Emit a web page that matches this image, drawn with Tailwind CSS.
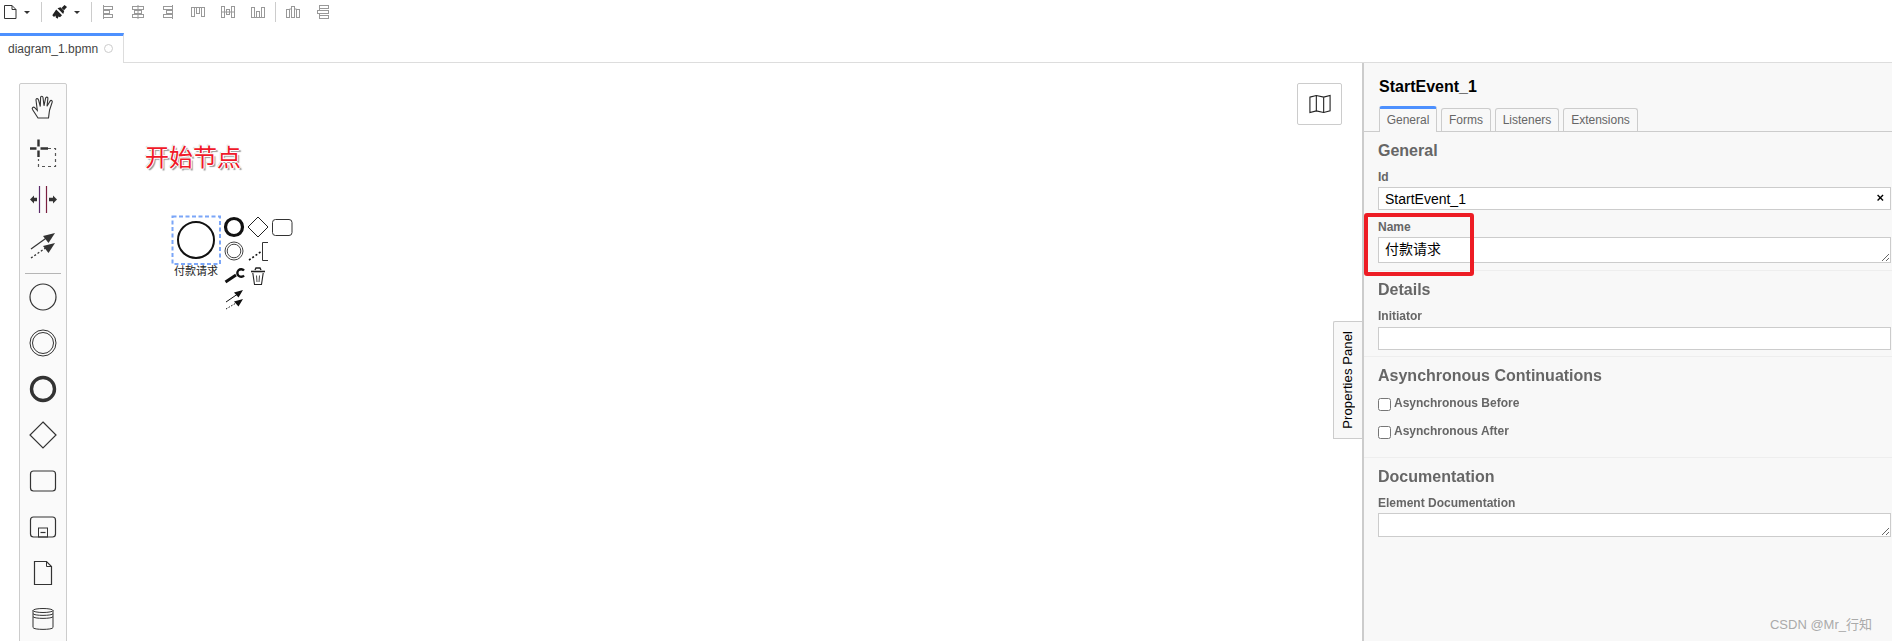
<!DOCTYPE html>
<html lang="zh">
<head>
<meta charset="utf-8">
<title>BPMN editor</title>
<script src="https://cdn.jsdelivr.net/npm/@tailwindcss/browser@4"></script>
</head>
<body class="w-[1892px] h-[641px] overflow-hidden bg-white [font-family:'Liberation_Sans','Noto_Sans_CJK_SC',sans-serif]">
<div class="flex flex-col w-full h-full relative">

  <!-- toolbar -->
  <div class="flex h-[33px] shrink-0 pt-[5px] items-start">
    <div class="w-[24px] h-[14px] pl-[4px]">
      <svg width="14" height="14" viewBox="0 0 14 14" fill="none" stroke="#333" stroke-width="1"><path d="M.5.5H8L12 4.5V13.5H.5Z"/><path d="M8 .5V4.5H12"/></svg>
    </div>
    <div class="w-[10px] h-[14px] flex items-center"><div class="w-0 h-0 border-x-[3.5px] border-x-transparent border-t-[3.5px] border-t-[#333]"></div></div>
    <div class="w-px h-[20px] bg-[#ccc] ml-[7px] -mt-[3px]"></div>
    <div class="w-[31px] h-[14px] pl-[10px]">
      <svg width="15" height="14" viewBox="0 0 15 14" fill="#222"><path d="M9.5 3 12.5 0 15 2 12 5.2Z"/><path d="M5.5 3.2 8.5 2.3 12.2 6 11.2 9Z"/><path d="M4.2 4.5 10 10.3 8 12.3 6.5 11.5 5.7 13.8 3.8 12.5 3.5 10.5 2 12 .3 10.3Z"/></svg>
    </div>
    <div class="w-[11px] ml-px h-[14px] flex items-center"><div class="w-0 h-0 border-x-[3.5px] border-x-transparent border-t-[3.5px] border-t-[#333]"></div></div>
    <div class="w-px h-[20px] bg-[#ccc] ml-[6px] -mt-[3px]"></div>
    <div class="flex">
      <div class="w-[30px] flex justify-center ml-px"><svg width="14" height="14" viewBox="0 0 14 14" fill="none" stroke="#999"><path d="M2.5 0V14"/><rect x="2.5" y="1.5" width="9" height="3"/><rect x="2.5" y="5.5" width="6" height="3"/><rect x="2.5" y="9.5" width="9" height="3"/></svg></div>
      <div class="w-[30px] flex justify-center"><svg width="14" height="14" viewBox="0 0 14 14" fill="none" stroke="#999"><path d="M7 0V14"/><rect x="1.5" y="1.5" width="11" height="3"/><rect x="3.5" y="5.5" width="7" height="3"/><rect x="1.5" y="9.5" width="11" height="3"/></svg></div>
      <div class="w-[30px] flex justify-center"><svg width="14" height="14" viewBox="0 0 14 14" fill="none" stroke="#999"><path d="M11.5 0V14"/><rect x="2.5" y="1.5" width="9" height="3"/><rect x="5.5" y="5.5" width="6" height="3"/><rect x="2.5" y="9.5" width="9" height="3"/></svg></div>
      <div class="w-[30px] flex justify-center"><svg width="14" height="14" viewBox="0 0 14 14" fill="none" stroke="#999"><path d="M0 2.5H14"/><rect x=".5" y="2.5" width="3" height="9"/><rect x="5.5" y="2.5" width="3" height="6"/><rect x="10.5" y="2.5" width="3" height="9"/></svg></div>
      <div class="w-[30px] flex justify-center"><svg width="14" height="14" viewBox="0 0 14 14" fill="none" stroke="#999"><path d="M0 7H14"/><rect x=".5" y="1.5" width="3" height="11"/><rect x="5.5" y="4.5" width="3" height="5"/><rect x="10.5" y="1.5" width="3" height="11"/></svg></div>
      <div class="w-[30px] flex justify-center"><svg width="14" height="14" viewBox="0 0 14 14" fill="none" stroke="#999"><path d="M0 12.5H14"/><rect x=".5" y="2.5" width="3" height="10"/><rect x="5.5" y="6.5" width="3" height="6"/><rect x="10.5" y="2.5" width="3" height="10"/></svg></div>
    </div>
    <div class="w-px h-[20px] bg-[#ccc] ml-[2px] -mt-[3px]"></div>
    <div class="flex ml-[2px]">
      <div class="w-[30px] flex justify-center"><svg width="14" height="14" viewBox="0 0 14 14" fill="none" stroke="#999"><rect x=".5" y="4.5" width="3" height="8"/><rect x="5.5" y="1.5" width="3" height="11"/><rect x="10.5" y="4.5" width="3" height="8"/><path d="M3.5 4H5.5M8.5 4H10.5"/></svg></div>
      <div class="w-[30px] flex justify-center"><svg width="14" height="14" viewBox="0 0 14 14" fill="none" stroke="#999"><rect x="3.5" y=".5" width="9" height="3"/><rect x="1.5" y="5.5" width="11" height="3"/><rect x="3.5" y="10.5" width="9" height="3"/><path d="M3.5 3.5V5.5M3.5 8.5V10.5"/></svg></div>
    </div>
  </div>

  <!-- tab row -->
  <div class="flex h-[30px] shrink-0">
    <div class="w-[124px] border-t-[3px] border-t-[#4d90fe] border-r border-r-[#ddd] flex items-center pl-[8px] gap-[6px] pb-[2px]">
      <span class="text-[12px] leading-[16px] text-[#444]">diagram_1.bpmn</span>
      <span class="w-[9px] h-[9px] rounded-full border border-[#ccc] bg-white"></span>
    </div>
    <div class="flex-1 border-b border-[#ddd]"></div>
  </div>

  <!-- main -->
  <div class="flex flex-1 min-h-0">
    <!-- canvas -->
    <div class="relative flex-1 overflow-hidden">
      <!-- palette -->
      <div class="absolute left-[19px] top-[20px] w-[48px] bottom-[-10px] bg-[#fafafa] border border-[#ccc] rounded-t-[2px] pt-[1px]">
        <svg class="block" width="46" height="46" viewBox="0 0 46 46" fill="none" stroke="#333"><g transform="translate(11 10)" stroke-width="1.1"><path d="M7 23 1.5 14.5C.5 12.8 2.5 11.5 3.7 12.7L6.3 15.5 5 5C4.8 3.3 7 3 7.5 4.8L9.3 11.5 9.6 2.5C9.6.8 11.8.8 12 2.5L13 10.8 14.6 3.2C15 1.5 17.2 1.9 16.9 3.6L16 11.2 19 6.2C19.9 4.7 21.7 5.6 21.2 7.2L18.6 15C18 18 18 20 17.5 23Z"/></g></svg>
        <svg class="block" width="46" height="46" viewBox="0 0 46 46" fill="none" stroke="#333"><path d="M10 17.5H16.5M20.5 17.5H28M18.5 8.5V15.5M18.5 19.5V26" stroke-width="2.4"/><path d="M28 17.5H35.5V35.5H18.5V28" stroke="#555" stroke-width="1.2" stroke-dasharray="3 3"/></svg>
        <svg class="block" width="46" height="46" viewBox="0 0 46 46" fill="none" stroke="#333"><path d="M19.5 9V36" stroke="#5a2a6a" stroke-width="1.2"/><path d="M26.5 9V36" stroke="#7a2040" stroke-width="1.2"/><path d="M10 22.5 14 18.5V20.8H17V24.2H14V26.5Z" fill="#333" stroke="none"/><path d="M37 22.5 33 18.5V20.8H29V24.2H33V26.5Z" fill="#333" stroke="none"/></svg>
        <svg class="block" width="46" height="46" viewBox="0 0 46 46" fill="none" stroke="#333"><path d="M11 26 27 14.5" stroke-width="1.2"/><path d="M35 10 23 13 28.5 20Z" fill="#333" stroke="none"/><path d="M11 35 27 24" stroke-width="1.3" stroke-dasharray="2 2"/><path d="M35 20 23 23 28.5 30Z" fill="#333" stroke="none"/></svg>
        <div class="h-px bg-[#b5b5b5] mx-[5px] mt-[4px]"></div>
        <svg class="block" width="46" height="46" viewBox="0 0 46 46" fill="none" stroke="#333"><circle cx="23" cy="23" r="13" stroke-width="1.2"/></svg>
        <svg class="block" width="46" height="46" viewBox="0 0 46 46" fill="none" stroke="#333"><circle cx="23" cy="23" r="13" stroke-width="1"/><circle cx="23" cy="23" r="10.5" stroke-width="1"/></svg>
        <svg class="block" width="46" height="46" viewBox="0 0 46 46" fill="none" stroke="#333"><circle cx="23" cy="23" r="11.5" stroke-width="3.4"/></svg>
        <svg class="block" width="46" height="46" viewBox="0 0 46 46" fill="none" stroke="#333"><path d="M23 10 36 23 23 36 10 23Z" stroke-width="1.2"/></svg>
        <svg class="block" width="46" height="46" viewBox="0 0 46 46" fill="none" stroke="#333"><rect x="10.5" y="13" width="25" height="20" rx="3" stroke-width="1.2"/></svg>
        <svg class="block" width="46" height="46" viewBox="0 0 46 46" fill="none" stroke="#333"><rect x="10.5" y="13" width="25" height="20" rx="3" stroke-width="1.2"/><rect x="18.5" y="24" width="9" height="9" stroke-width="1"/><path d="M20.5 28.5H25.5" stroke-width="1.2"/></svg>
        <svg class="block" width="46" height="46" viewBox="0 0 46 46" fill="none" stroke="#333"><path d="M14.5 11.5H26.5L31.5 16.5V34.5H14.5Z" stroke-width="1.2"/><path d="M26.5 11.5V16.5H31.5" stroke-width="1"/></svg>
        <svg class="block" width="46" height="46" viewBox="0 0 46 46" fill="none" stroke="#333" stroke-width="1"><ellipse cx="23" cy="14.5" rx="10" ry="2"/><path d="M13 14.5V31.5C13 34 33 34 33 31.5V14.5"/><path d="M13 17.5C13 20 33 20 33 17.5M13 20.5C13 23 33 23 33 20.5"/></svg>
      </div>

      <!-- diagram text -->
      <div class="absolute left-[145px] top-[80px] text-[24px] leading-[30px] text-[#f01828] whitespace-nowrap [text-shadow:1px_0_0_#fff,-1px_0_0_#fff,0_1px_0_#fff,0_-1px_0_#fff,2px_2px_1px_#999,-1px_-1px_1px_#ccc]">开始节点</div>
      <div class="absolute left-[174px] top-[201px] w-[44px] text-center text-[11px] leading-[14px] text-[#222] whitespace-nowrap">付款请求</div>

      <!-- diagram shapes and context pad -->
      <svg class="absolute left-[160px] top-[142px]" width="140" height="110" viewBox="0 0 140 110" fill="none" stroke="#111">
        <rect x="12.5" y="11.5" width="47.5" height="47.5" stroke="#7ba6f8" stroke-width="2" stroke-dasharray="4 2.5"/>
        <circle cx="36" cy="35" r="18" stroke-width="2"/>
        <circle cx="74" cy="22" r="8.5" stroke-width="3.2"/>
        <path d="M98 12 108 22 98 32 88 22Z" stroke="#222" stroke-width="1"/>
        <rect x="112.5" y="14.5" width="19.5" height="16" rx="3" stroke="#333" stroke-width="1"/>
        <circle cx="74" cy="46" r="9" stroke="#444" stroke-width="1"/>
        <circle cx="74" cy="46" r="6.8" stroke="#444" stroke-width="1"/>
        <path d="M89 55 102 46" stroke-width="1.6" stroke-dasharray="2 2"/>
        <path d="M108 37.5H102.5V55.5H108" stroke="#333" stroke-width="1"/>
        <path d="M65.5 77 76 70" stroke-width="3"/>
        <path d="M84 65.5A3.8 3.8 0 1 0 84 70.5" stroke-width="2.4"/>
        <path d="M91 66.5H105" stroke="#222" stroke-width="1.6"/>
        <path d="M95 65 96 63H100L101 65" stroke="#222" stroke-width="1.4"/>
        <path d="M92.8 68 94.5 79.5H101.5L103.2 68" stroke="#222" stroke-width="1.1"/>
        <path d="M96.5 70.5 97 77M99.5 70.5 99 77" stroke="#333" stroke-width=".9"/>
        <path d="M66 97 77 89.5" stroke-width="1"/>
        <path d="M83 85 74 87.5 78.5 92.5Z" fill="#111" stroke="none"/>
        <path d="M66 104 77 97.5" stroke-width="1" stroke-dasharray="1.5 1.5"/>
        <path d="M83 94 74 96.5 78.5 101.5Z" fill="#111" stroke="none"/>
      </svg>

      <!-- minimap toggle -->
      <div class="absolute right-[20px] top-[20px] w-[45px] h-[42px] bg-white border border-[#ccc] rounded-[2px] flex items-center justify-center">
        <svg width="22" height="20" viewBox="0 0 24 20" fill="none" stroke="#222" stroke-width="1.2"><path d="M1 2.5 8 .8 16 2.5 23 .8V17.5L16 19.2 8 17.5 1 19.2Z"/><path d="M8 .8V17.5M16 2.5V19.2"/></svg>
      </div>

      <!-- properties toggle -->
      <div class="absolute right-0 top-[258px] w-[29px] h-[118px] bg-[#f8f8f8] border border-r-0 border-[#ccc] rounded-tl-[2px] flex items-center justify-center">
        <span class="[writing-mode:vertical-rl] rotate-180 text-[13px] leading-[14px] tracking-[0.1px] text-black whitespace-nowrap">Properties Panel</span>
      </div>
    </div>

    <!-- properties panel -->
    <aside class="relative w-[530px] shrink-0 bg-[#f8f8f8] border-l-2 border-[#ccc]">
      <div class="pl-[15px] pt-[14px] h-[43px] text-[16px] leading-[20px] font-bold text-black">StartEvent_1</div>
      <div class="flex gap-[4px] pl-[15px] h-[26px] items-end border-b border-[#ccc]">
        <div class="w-[58px] h-[26px] -mb-px bg-[#f8f8f8] border-x border-[#ccc] border-t-[3px] border-t-[#4d90fe] rounded-t-[3px] text-center text-[12px] leading-[23px] text-[#666]">General</div>
        <div class="w-[50px] h-[23px] border-x border-t border-[#ccc] rounded-t-[3px] text-center text-[12px] leading-[23px] text-[#666]">Forms</div>
        <div class="w-[64px] h-[23px] border-x border-t border-[#ccc] rounded-t-[3px] text-center text-[12px] leading-[23px] text-[#666]">Listeners</div>
        <div class="w-[75px] h-[23px] border-x border-t border-[#ccc] rounded-t-[3px] text-center text-[12px] leading-[23px] text-[#666]">Extensions</div>
      </div>

      <section class="pl-[14px] pr-px pt-[9px] pb-[7px] border-b border-[#eee]">
        <h2 class="text-[16px] leading-[20px] font-bold text-[#666]">General</h2>
        <label class="block mt-[9px] text-[12px] leading-[14px] font-bold text-[#666]">Id</label>
        <div class="relative mt-[3px]">
          <input class="block w-full h-[23px] border border-[#ccc] bg-white px-[6px] text-[14px] text-black" value="StartEvent_1">
          <span class="absolute right-[7px] top-[3px] text-[13px] leading-[16px] font-bold text-black">×</span>
        </div>
        <label class="block mt-[10px] text-[12px] leading-[14px] font-bold text-[#666]">Name</label>
        <textarea class="block mt-[3px] w-full h-[26px] border border-[#ccc] bg-white px-[6px] pt-[3px] text-[14px] leading-[17px] text-black">付款请求</textarea>
      </section>

      <section class="pl-[14px] pr-px pt-[9px] pb-[6px] border-b border-[#eee]">
        <h2 class="text-[16px] leading-[20px] font-bold text-[#666]">Details</h2>
        <label class="block mt-[9px] text-[12px] leading-[14px] font-bold text-[#666]">Initiator</label>
        <input class="block mt-[4px] w-full h-[23px] border border-[#ccc] bg-white">
      </section>

      <section class="pl-[14px] pr-px pt-[9px] pb-[18px] border-b border-[#eee]">
        <h2 class="text-[16px] leading-[20px] font-bold text-[#666]">Asynchronous Continuations</h2>
        <div class="flex items-start gap-[3px] mt-[12px]">
          <input type="checkbox" class="m-0 w-[13px] h-[13px]">
          <span class="text-[12px] leading-[10px] font-bold text-[#666]">Asynchronous Before</span>
        </div>
        <div class="flex items-start gap-[3px] mt-[15px]">
          <input type="checkbox" class="m-0 w-[13px] h-[13px]">
          <span class="text-[12px] leading-[10px] font-bold text-[#666]">Asynchronous After</span>
        </div>
      </section>

      <section class="pl-[14px] pr-px pt-[9px]">
        <h2 class="text-[16px] leading-[20px] font-bold text-[#666]">Documentation</h2>
        <label class="block mt-[9px] text-[12px] leading-[14px] font-bold text-[#666]">Element Documentation</label>
        <textarea class="block mt-[3px] w-full h-[24px] border border-[#ccc] bg-white"></textarea>
      </section>

      <!-- red annotation -->
      <div class="absolute left-0 top-[150px] w-[110px] h-[63px] border-4 border-[#ed1c24] rounded-[3px] pointer-events-none"></div>
      <!-- watermark -->
      <div class="absolute right-[20px] top-[553px] text-[13px] leading-[18px] text-[#aaa] whitespace-nowrap">CSDN @Mr_行知</div>
    </aside>
  </div>
</div>
</body>
</html>
